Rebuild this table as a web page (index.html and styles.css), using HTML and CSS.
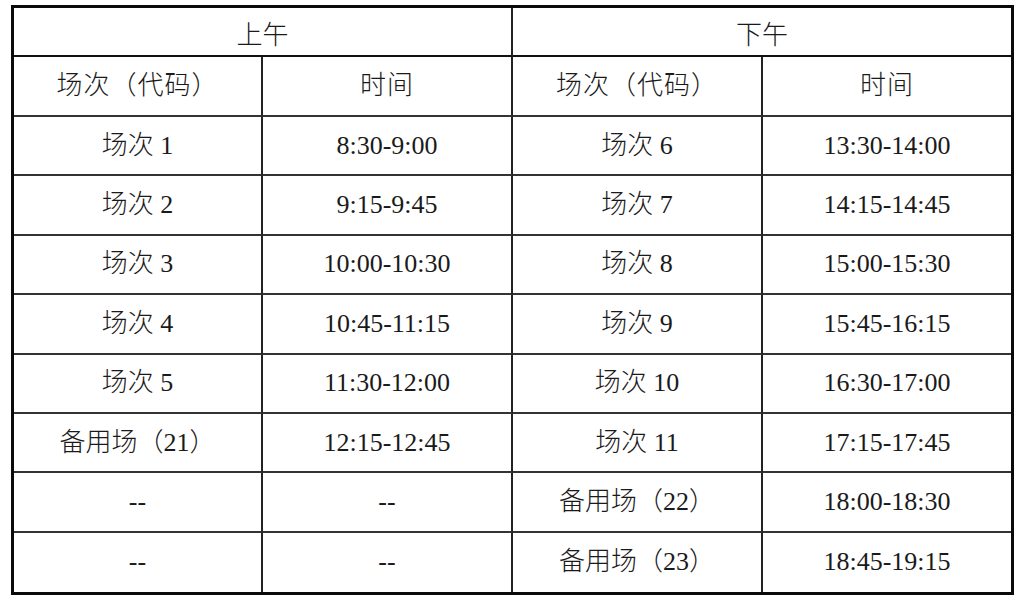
FILE: index.html
```html
<!DOCTYPE html>
<html lang="zh-CN">
<head>
<meta charset="utf-8">
<title>场次时间表</title>
<link rel="stylesheet" href="styles.css">
</head>
<body>
<div class="sheet">
  <div class="cell head span2">上午</div>
  <div class="cell head span2 last">下午</div>

  <div class="cell sub">场次（代码）</div>
  <div class="cell sub">时间</div>
  <div class="cell sub">场次（代码）</div>
  <div class="cell sub last">时间</div>

  <div class="cell">场次 1</div><div class="cell">8:30-9:00</div><div class="cell">场次 6</div><div class="cell last">13:30-14:00</div>
  <div class="cell">场次 2</div><div class="cell">9:15-9:45</div><div class="cell">场次 7</div><div class="cell last">14:15-14:45</div>
  <div class="cell">场次 3</div><div class="cell">10:00-10:30</div><div class="cell">场次 8</div><div class="cell last">15:00-15:30</div>
  <div class="cell">场次 4</div><div class="cell">10:45-11:15</div><div class="cell">场次 9</div><div class="cell last">15:45-16:15</div>
  <div class="cell">场次 5</div><div class="cell">11:30-12:00</div><div class="cell">场次 10</div><div class="cell last">16:30-17:00</div>
  <div class="cell">备用场（21）</div><div class="cell">12:15-12:45</div><div class="cell">场次 11</div><div class="cell last">17:15-17:45</div>
  <div class="cell">--</div><div class="cell">--</div><div class="cell">备用场（22）</div><div class="cell last">18:00-18:30</div>
  <div class="cell bottom">--</div><div class="cell bottom">--</div><div class="cell bottom">备用场（23）</div><div class="cell bottom last">18:45-19:15</div>
</div>
</body>
</html>
```

FILE: styles.css
```css
html, body {
  margin: 0;
  padding: 0;
  background: #ffffff;
}

body {
  font-family: "Liberation Serif", "Noto Sans CJK SC", serif;
  font-size: 26px;
  font-weight: 300;
  color: #1a1a1a;
}

.sheet {
  box-sizing: border-box;
  width: 1003px;
  height: 590px;
  margin: 5px 0 0 11px;
  border: 3px solid #0a0a0a;
  display: grid;
  grid-template-columns: 249px 250px 250px 248px;
  grid-template-rows: 49px 60px repeat(8, 1fr);
  background: #ffffff;
}

.cell {
  display: flex;
  align-items: center;
  justify-content: center;
  border-right: 2px solid #222222;
  border-bottom: 2px solid #333333;
  line-height: 1;
  white-space: nowrap;
}

.cell.last {
  border-right: none;
}

.cell.bottom {
  border-bottom: none;
}

.span2 {
  grid-column: span 2;
}

.head {
  border-bottom: 2px solid #111111;
  padding-top: 9px;
  box-sizing: border-box;
}

.sub {
  letter-spacing: 1px;
}
```
